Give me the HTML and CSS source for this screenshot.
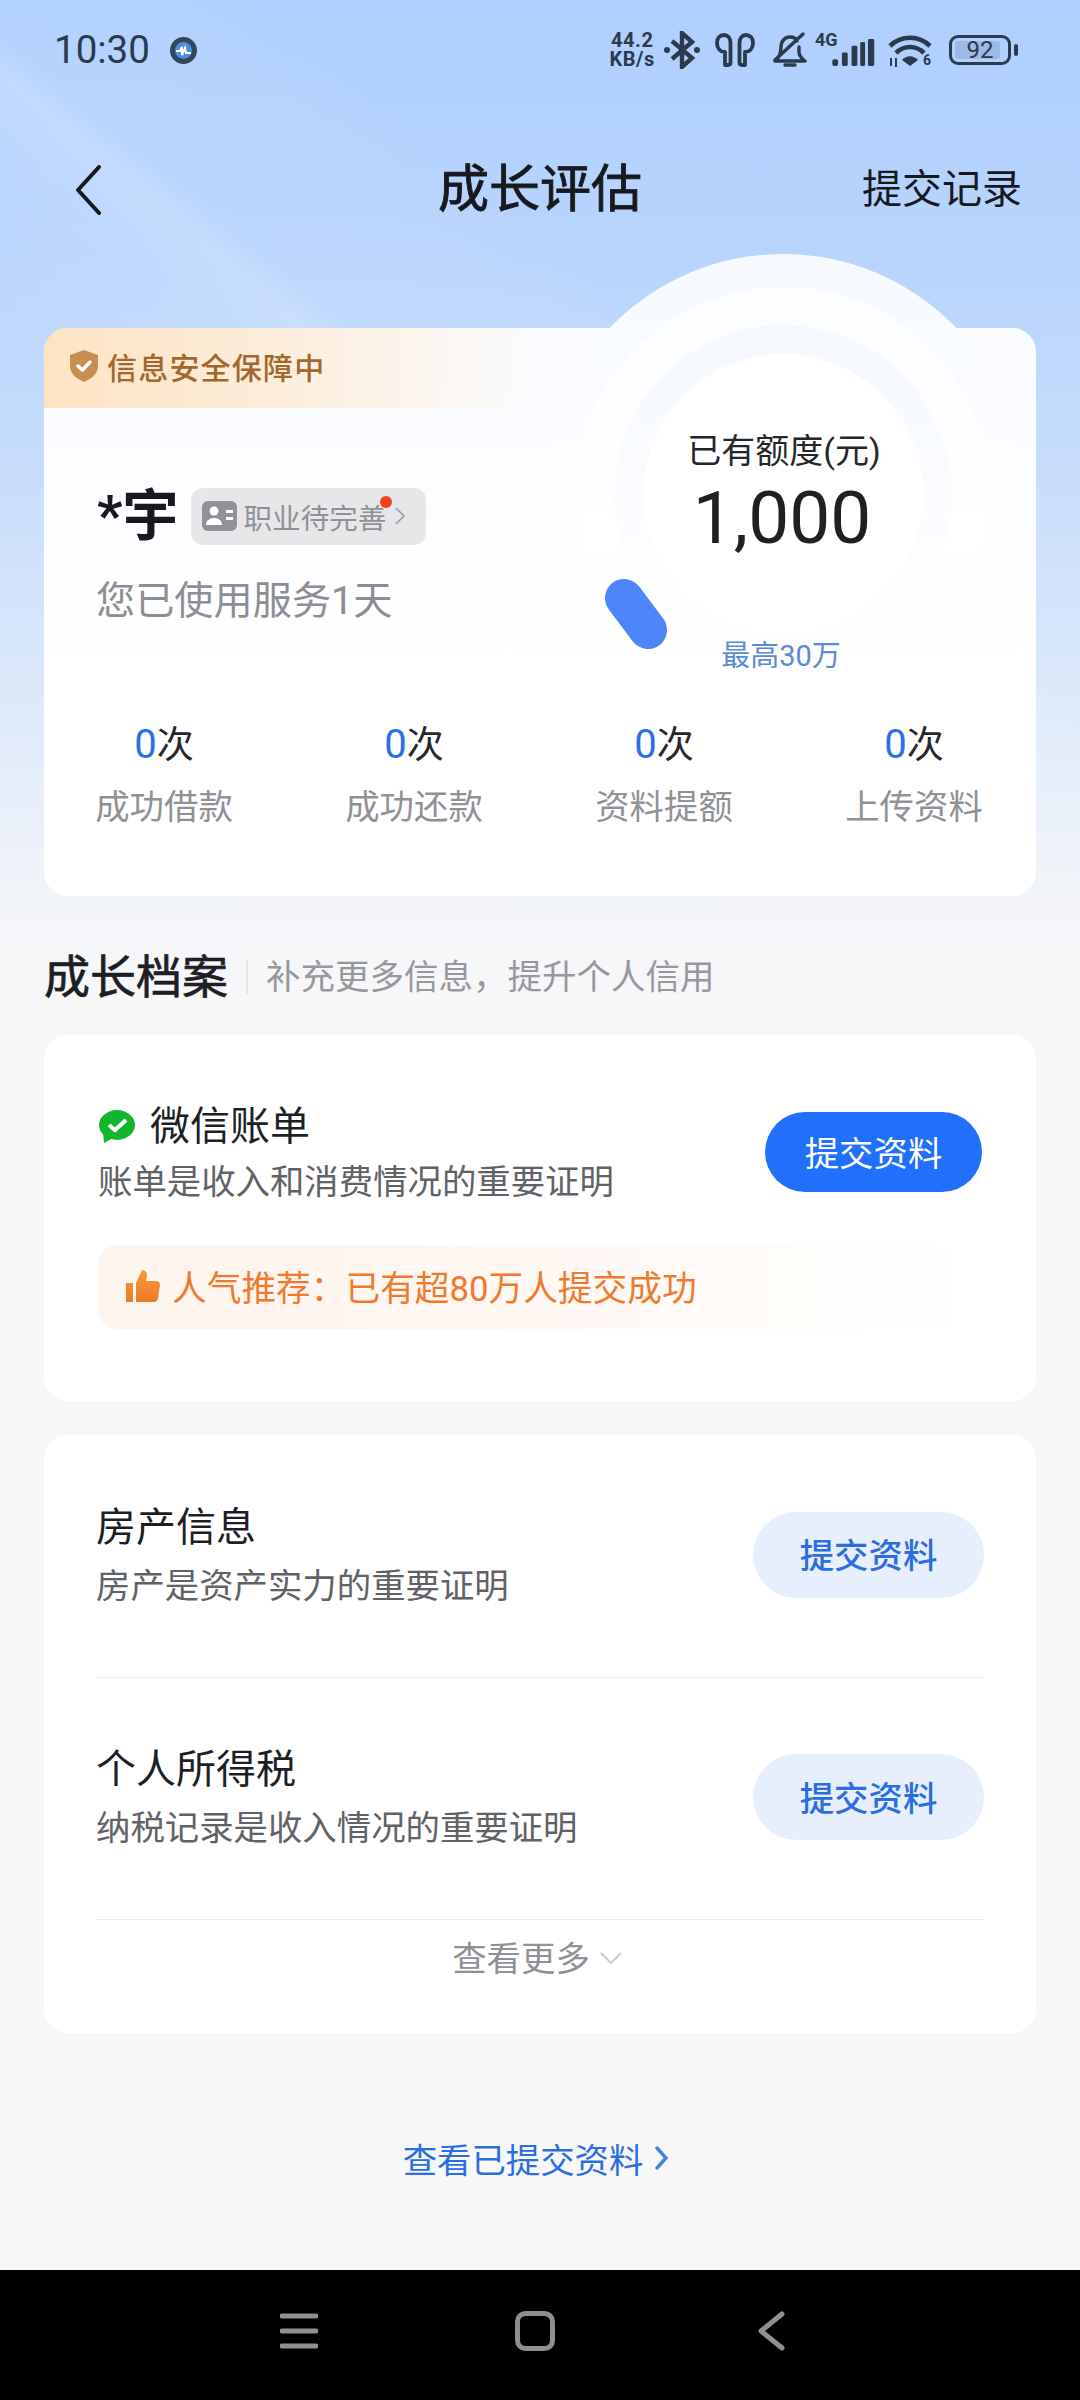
FILE: index.html
```html
<!DOCTYPE html>
<html lang="zh-CN">
<head>
<meta charset="utf-8">
<title>成长评估</title>
<link rel="stylesheet" href="styles.css">
</head>
<body>
<div class="screen">
  <div class="content">
    <header class="status">
      <div class="status-left">
        <span class="clock">10:30</span>
        <svg class="app-dot" viewBox="0 0 27 27"><circle cx="13.500" cy="13.500" r="11" fill="#4a90e2" stroke="#33465c" stroke-width="5"/><path d="M6 14h4l2-4v8l3-7 1 5h5" fill="none" stroke="#fff" stroke-width="2"/></svg>
      </div>
      <div class="status-right">
        <div class="speed"><span>44.2</span><span>KB/s</span></div>
        <svg class="ic-bt" viewBox="0 0 36 38"><path d="M8 10 28 27 18 36V2L28 11 8 28" fill="none" stroke="#2b3a4d" stroke-width="4.400"/><circle cx="3" cy="19" r="3" fill="#2b3a4d"/><circle cx="33" cy="19" r="3" fill="#2b3a4d"/></svg>
        <svg class="ic-buds" viewBox="0 0 40 34"><path d="M10 32h3c1.500 0 2.500-1 2.500-2.500V10C15.500 5 13 2 9 2 5 2 2 5 2 10c0 5 3 9 8 9Z M30 32h-3c-1.500 0-2.500-1-2.500-2.500V10C24.500 5 27 2 31 2c4 0 7 3 7 8 0 5-3 9-8 9Z" fill="none" stroke="#2b3a4d" stroke-width="3.800" stroke-linejoin="round"/></svg>
        <svg class="ic-bell" viewBox="0 0 36 36"><path d="M3 29C8 25 9 21 9 15 9 9 13 5 18 5c3 0 6 1 7 4M27 15v5c0 4 2 6 6 9H3M13 33h10M3 28 31 2" fill="none" stroke="#2b3a4d" stroke-width="3.400" stroke-linecap="round" stroke-linejoin="round"/></svg>
        <div class="signal">
          <span class="net">4G</span>
          <svg class="ic-signal" viewBox="0 0 44 28"><g fill="#2b3a4d"><rect x="0" y="21" width="6" height="7" rx="2"/><rect x="10" y="14" width="6" height="14" rx="1.500"/><rect x="20" y="7" width="6" height="21" rx="1.500"/><rect x="29" y="3" width="5" height="25" rx="1.500"/><rect x="37" y="0" width="6.500" height="28" rx="1.500"/></g></svg>
        </div>
        <svg class="ic-wifi" viewBox="0 0 46 36"><path d="M2 14C13 3 31 3 42 14M8 21C16 13 28 13 36 21" fill="none" stroke="#2b3a4d" stroke-width="4.600"/><path d="M14 28c5-5 11-5 16 0l-8 6Z" fill="#2b3a4d"/><path d="M3 26v8M8 35v-9" stroke="#2b3a4d" stroke-width="2"/><text x="35" y="32.500" class="wifi-six">6</text></svg>
        <div class="battery"><span class="battery-fill"></span><span class="battery-text">92</span></div>
        <span class="battery-nub"></span>
      </div>
    </header>

    <nav class="nav">
      <svg class="nav-back" viewBox="0 0 30 50"><path d="M26 2 5 25l21 23" fill="none" stroke="#15181d" stroke-width="4" stroke-linecap="round" stroke-linejoin="round"/></svg>
      <h1 class="nav-title">成长评估</h1>
      <a class="nav-link">提交记录</a>
    </nav>

    <main class="main">
      <section class="hero card">
        <div class="safe"><svg class="ic-shield" viewBox="0 0 28 32"><path d="M14 0 28 5V16C28 24 21 29 14 32 7 29 0 24 0 16V5Z" fill="#c58f52"/><path d="M8 16l4.500 4L20 12" fill="none" stroke="#fff" stroke-width="3.500" stroke-linecap="round" stroke-linejoin="round"/></svg><span>信息安全保障中</span></div>

        <div class="dial">
          <svg class="dial-art" viewBox="0 0 482 482">
            <defs>
              <linearGradient id="dialOuter" x1="0" y1="0" x2="0" y2="1"><stop offset="0" stop-color="#f5f9ff"/><stop offset=".45" stop-color="#fcfdff"/><stop offset=".8" stop-color="#fff" stop-opacity="0"/></linearGradient>
              <linearGradient id="dialMid" x1="0" y1="0" x2="0" y2="1"><stop offset="0" stop-color="#fcfdff"/><stop offset=".6" stop-color="#fff"/><stop offset="1" stop-color="#fff" stop-opacity="0"/></linearGradient>
              <linearGradient id="dialRing" x1="0" y1="0" x2="0" y2="1"><stop offset="0" stop-color="#f5f8fe"/><stop offset=".55" stop-color="#fafcff"/><stop offset="1" stop-color="#fff"/></linearGradient>
            </defs>
            <circle cx="241" cy="241" r="240" fill="url(#dialOuter)"/>
            <circle cx="241" cy="241" r="207" fill="url(#dialMid)"/>
            <circle cx="241" cy="241" r="169" fill="url(#dialRing)"/>
            <circle cx="241" cy="241" r="140" fill="#fff"/>
            <line x1="82" y1="345" x2="106" y2="377" stroke="#4f85fb" stroke-width="38" stroke-linecap="round"/>
          </svg>
          <div class="dial-label">已有额度(元)</div>
          <div class="dial-value">1,000</div>
          <div class="dial-max">最高30万</div>
        </div>

        <div class="profile">
          <div class="name-row">
            <span class="name">*宇</span>
            <span class="tag">
              <svg class="ic-id" viewBox="0 0 35 30"><rect width="35" height="30" rx="6" fill="#909298"/><circle cx="12" cy="10" r="4.500" fill="#fff"/><path d="M4 24c0-5 4-7 8-7s8 2 8 7Z" fill="#fff"/><rect x="24" y="9" width="7" height="3" fill="#fff"/><rect x="24" y="16" width="7" height="3" fill="#fff"/></svg>
              <span>职业待完善</span>
              <svg class="ic-tag-chev" viewBox="0 0 10 18"><path d="M1 1l8 8-8 8" fill="none" stroke="#96989d" stroke-width="1.500"/></svg>
              <i class="tag-dot"></i>
            </span>
          </div>
          <p class="since">您已使用服务1天</p>
        </div>

        <ul class="stats">
          <li class="stat"><div class="stat-num"><b>0</b>次</div><div class="stat-label">成功借款</div></li>
          <li class="stat"><div class="stat-num"><b>0</b>次</div><div class="stat-label">成功还款</div></li>
          <li class="stat"><div class="stat-num"><b>0</b>次</div><div class="stat-label">资料提额</div></li>
          <li class="stat"><div class="stat-num"><b>0</b>次</div><div class="stat-label">上传资料</div></li>
        </ul>
      </section>

      <div class="section-head">
        <h2>成长档案</h2>
        <span>补充更多信息，提升个人信用</span>
      </div>

      <section class="card wechat">
        <div class="row-wechat">
          <div>
            <div class="item-title wx-title">
              <svg class="ic-wx" viewBox="0 0 36 34"><path d="M4 22 5 33 14 28Z" fill="#12b52e"/><ellipse cx="18" cy="15" rx="18" ry="15" fill="#12b52e"/><path d="M10 15l6 5 11-10" fill="none" stroke="#fff" stroke-width="4"/></svg>
              <span>微信账单</span>
            </div>
            <div class="item-sub">账单是收入和消费情况的重要证明</div>
          </div>
          <button class="btn btn-primary">提交资料</button>
        </div>
        <div class="promo">
          <svg class="ic-thumb" viewBox="0 0 34 32"><defs><linearGradient id="thumbFill" x1="0" y1="0" x2="0" y2="1"><stop offset="0" stop-color="#f39a3c"/><stop offset="1" stop-color="#f07a26"/></linearGradient></defs><path d="M0 13h7v19H0ZM10 13l6-13c3 0 5 2 5 5l-1 6h10c3 0 4 2 4 4l-2 13c-.5 3-2 4-4 4H10Z" fill="url(#thumbFill)"/></svg>
          <span>人气推荐：已有超80万人提交成功</span>
        </div>
      </section>

      <section class="card list">
        <div class="list-row">
          <div>
            <div class="item-title">房产信息</div>
            <div class="item-sub">房产是资产实力的重要证明</div>
          </div>
          <button class="btn btn-soft">提交资料</button>
        </div>
        <div class="list-row">
          <div>
            <div class="item-title">个人所得税</div>
            <div class="item-sub">纳税记录是收入情况的重要证明</div>
          </div>
          <button class="btn btn-soft">提交资料</button>
        </div>
        <div class="more">
          <span>查看更多</span>
          <svg class="ic-more" viewBox="0 0 22 13"><path d="M1 1l10 10L21 1" fill="none" stroke="#c9cacd" stroke-width="1.800"/></svg>
        </div>
      </section>

      <a class="submitted">
        <span>查看已提交资料</span>
        <svg class="ic-link" viewBox="0 0 14 24"><path d="M2 2l9 10-9 10" fill="none" stroke="#4a80ea" stroke-width="3.400" stroke-linecap="round"/></svg>
      </a>
    </main>
  </div>

  <footer class="navbar">
    <svg class="sys-menu" viewBox="0 0 38 36"><path d="M2 3h34M2 18h34M2 33h34" stroke="#8f8f8f" stroke-width="5" stroke-linecap="round"/></svg>
    <svg class="sys-home" viewBox="0 0 40 40"><rect x="2.500" y="2.500" width="35" height="35" rx="8" fill="none" stroke="#8f8f8f" stroke-width="5"/></svg>
    <svg class="sys-back" viewBox="0 0 28 40"><path d="M25 3 4 20l21 17" fill="none" stroke="#8f8f8f" stroke-width="5" stroke-linecap="round" stroke-linejoin="round"/></svg>
  </footer>
</div>
</body>
</html>
```

FILE: styles.css
```css
* { box-sizing: border-box; }
html, body { margin: 0; padding: 0; }
body {
  width: 1080px;
  height: 2400px;
  overflow: hidden;
  font-family: Roboto, "Noto Sans CJK SC", sans-serif;
  color: #17191e;
}
h1, h2, p, ul { margin: 0; padding: 0; font-weight: 400; }
ul { list-style: none; }
svg { display: block; flex: none; }

.screen { width: 1080px; height: 2400px; display: flex; flex-direction: column; }
.content {
  height: 2270px;
  background-color: #f7f7f8;
  background-image:
    linear-gradient(40deg, rgba(255,255,255,0) 400px, rgba(255,255,255,.1) 580px, rgba(255,255,255,.2) 635px, rgba(255,255,255,.06) 665px, rgba(255,255,255,.05) 800px, rgba(255,255,255,0) 860px),
    linear-gradient(180deg, #afcffe 0, #b8d4fd 250px, #c6dcfb 450px, #dde9fa 700px, #f5f6f9 930px, #f7f7f8 1000px);
  background-size: 1080px 900px, 1080px 1000px;
  background-repeat: no-repeat;
}

/* status bar */
.status { height: 100px; display: flex; justify-content: space-between; align-items: center; padding: 0 62px 0 54px; }
.status-left { display: flex; align-items: center; gap: 20px; }
.clock { font-size: 38.500px; color: #2b3a4d; line-height: 1; }
.app-dot { width: 27px; height: 27px; }
.status-right { display: flex; align-items: center; color: #2b3a4d; }
.speed { display: flex; flex-direction: column; align-items: center; font-size: 20px; font-weight: 700; line-height: 19px; white-space: nowrap; margin-right: 9px; letter-spacing: .6px; }
.ic-bt { width: 36px; height: 38px; margin-right: 15px; }
.ic-buds { width: 40px; height: 34px; margin-right: 17px; }
.ic-bell { width: 36px; height: 36px; margin-right: 7px; }
.signal { width: 60px; height: 34px; position: relative; margin-right: 13px; }
.net { position: absolute; left: 0; top: -2px; font-size: 18px; font-weight: 700; line-height: 18px; }
.ic-signal { position: absolute; left: 17px; top: 6px; width: 43px; height: 27px; }
.ic-wifi { width: 46px; height: 36px; margin-right: 15px; overflow: visible; }
.wifi-six { font-family: Roboto, sans-serif; font-size: 14px; font-weight: 700; fill: #2b3a4d; }
.battery { width: 62px; height: 30px; border: 3px solid #2b3a4d; border-radius: 9px; position: relative; display: flex; align-items: center; justify-content: center; padding: 2px; }
.battery-fill { position: absolute; left: 3px; top: 3px; bottom: 3px; width: 45px; background: #9dbae6; border-radius: 3px; }
.battery-text { position: relative; font-size: 24px; line-height: 1; }
.battery-nub { width: 4px; height: 12px; background: #2b3a4d; border-radius: 2px; margin-left: 3px; }

/* nav */
.nav { height: 180px; position: relative; display: flex; align-items: center; justify-content: center; }
.nav-back { position: absolute; left: 73px; top: 65px; width: 30px; height: 50px; }
.nav-title { font-size: 51px; line-height: 60px; -webkit-text-stroke: .9px #17191e; }
.nav-link { position: absolute; right: 58px; top: 65px; font-size: 40px; line-height: 50px; }

/* cards */
.main { padding: 48px 44px 0; }
.card { background: #fff; border-radius: 24px; }
.hero {
  height: 568px;
  position: relative;
  background: linear-gradient(180deg, #f9fbff 0, #fff 60%);
}
.safe {
  height: 80px;
  display: flex;
  align-items: center;
  padding: 0 0 4px 26px;
  gap: 9px;
  border-radius: 24px 0 0 0;
  background: linear-gradient(90deg, #fde3c3 0, #fcecd9 22%, #fcf4ea 35%, rgba(252,250,247,0) 50%);
  font-size: 30px;
  font-weight: 500;
  letter-spacing: 1.200px;
  color: #a3662d;
}
.ic-shield { width: 28px; height: 32px; }

.dial { position: absolute; left: 498px; top: -75px; width: 482px; height: 482px; display: flex; flex-direction: column; align-items: center; padding-top: 178px; }
.dial-art { position: absolute; left: 0; top: 0; width: 482px; height: 482px; }
.dial-label { position: relative; font-size: 34px; line-height: 40px; color: #24262a; margin-left: 2px; }
.dial-value { position: relative; font-size: 73px; line-height: 84px; margin-top: 5px; color: #1f2023; margin-left: -2px; }
.dial-max { position: relative; font-size: 29px; line-height: 36px; margin-top: 78px; color: #5b8ad8; margin-left: -4px; }

.profile { padding: 78px 0 0 53px; }
.name-row { display: flex; align-items: center; height: 60px; }
.name { font-size: 56px; font-weight: 700; line-height: 60px; color: #17191f; margin-right: 13px; }
.tag { position: relative; height: 57px; width: 235px; background: #e7e7e9; border-radius: 12px; display: flex; align-items: center; padding-left: 11px; font-size: 28.600px; color: #8f9196; }
.ic-id { width: 35px; height: 30px; margin-right: 6px; }
.ic-tag-chev { width: 10px; height: 18px; margin-left: 9px; }
.tag-dot { position: absolute; left: 189px; top: 8px; width: 12px; height: 12px; border-radius: 50%; background: #f2401e; }
.since { font-size: 39.200px; line-height: 50px; color: #8b8e94; margin: 30px 0 0 -1px; }

.stats { display: flex; margin-left: -5px; margin-top: 97px; }
.stat { flex: none; width: 250px; text-align: center; }
.stat-num { font-size: 37px; line-height: 44px; color: #26282d; }
.stat-num b { font-size: 40px; font-weight: 400; color: #2a6fe8; }
.stat-label { font-size: 34.400px; line-height: 44px; color: #8f9196; margin-top: 17px; }

.section-head { display: flex; align-items: center; height: 60px; margin-top: 51px; }
.section-head h2 { font-size: 46px; line-height: 60px; color: #1d1f24; margin-right: 18px; -webkit-text-stroke: .7px #1d1f24; }
.section-head span { font-size: 34.500px; line-height: 40px; color: #96989d; border-left: 2px solid #e4e5e8; padding-left: 18px; height: 34px; display: flex; align-items: center; }

.wechat { height: 366px; margin-top: 28px; padding: 69px 54px 0 56px; }
.row-wechat { display: flex; justify-content: space-between; margin-left: -2px; }
.item-title { font-size: 40px; line-height: 46px; color: #1d1f24; }
.wx-title { display: flex; align-items: center; gap: 15px; padding-left: 1px; }
.ic-wx { width: 36px; height: 34px; }
.item-sub { font-size: 34.400px; line-height: 44px; color: #606266; margin-top: 10px; }
.btn { border: 0; padding: 0 0 3px; font: inherit; font-size: 34.400px; display: block; border-radius: 50px; }
.btn-primary { width: 217px; height: 80px; background: #2070fb; color: #fff; margin-top: 8px; }
.btn-soft { width: 231px; height: 86px; background: #e8effc; color: #2a6ee0; font-weight: 500; }
.promo {
  height: 84px;
  margin-top: 41px;
  margin-right: 18px;
  margin-left: -2px;
  border-radius: 20px;
  display: flex;
  align-items: center;
  gap: 12px;
  padding: 0 0 2px 28px;
  background: linear-gradient(90deg, #fef4ee 0, #fff7f2 50%, rgba(255,255,255,0) 100%);
  font-size: 34.700px;
  color: #ee7a2d;
}
.ic-thumb { width: 34px; height: 32px; }

.list { height: 598px; margin-top: 34px; padding: 0 52px 0 52px; display: flex; flex-direction: column; }
.list-row { height: 243px; display: flex; justify-content: space-between; align-items: center; border-bottom: 1px solid #ececee; }
.list-row + .list-row { height: 242px; }
.list-row .btn { margin-top: -3px; }
.list .item-sub { margin-top: 13px; }
.more { display: flex; justify-content: center; align-items: center; gap: 10px; height: 72px; padding-right: 6px; font-size: 34.400px; color: #8f9196; }
.ic-more { width: 22px; height: 13px; margin-top: 4px; }

.submitted { display: flex; justify-content: center; align-items: center; gap: 12px; margin-top: 103px; padding-right: 8px; height: 44px; font-size: 34.400px; color: #2a6ee0; }
.ic-link { width: 14px; height: 24px; }

/* system nav */
.navbar { height: 130px; background: #000; position: relative; flex: none; }
.sys-menu { position: absolute; left: 280px; top: 43px; width: 38px; height: 36px; }
.sys-home { position: absolute; left: 515px; top: 41px; width: 40px; height: 40px; }
.sys-back { position: absolute; left: 757px; top: 41px; width: 28px; height: 40px; }
```
